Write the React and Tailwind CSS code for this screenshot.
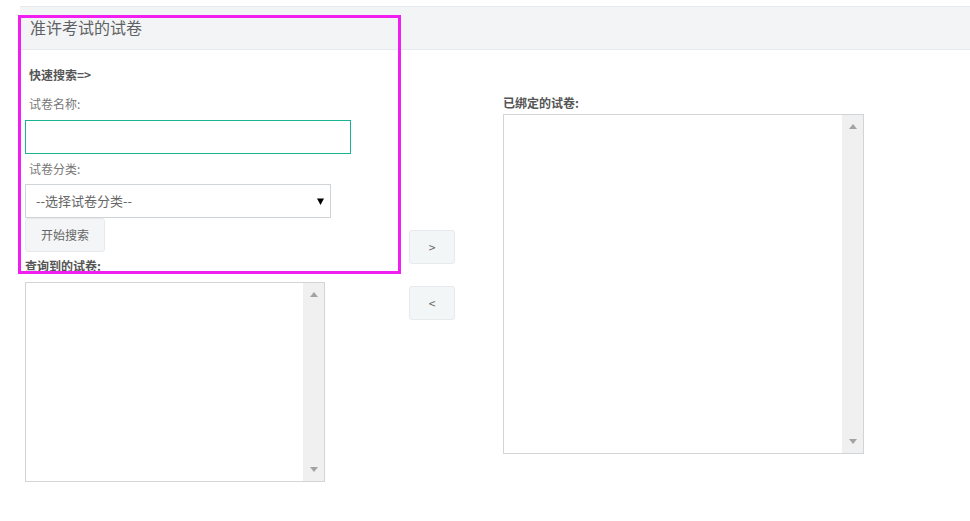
import React from "react";

const font = { fontFamily: '"Noto Sans CJK SC", "Liberation Sans", sans-serif' };

const ListBox = ({ className }) => (
  <div className={`flex border border-[#d1d5d7] bg-white ${className}`}>
    <div className="flex-1" />
    <div className="w-[21px] bg-[#f0f0f0] flex flex-col items-center justify-between pt-[9px] pb-[9px]">
      <svg width="8" height="5" viewBox="0 0 8 5"><path d="M0 5 L4 0 L8 5 Z" fill="#a3a3a3" /></svg>
      <svg width="8" height="5" viewBox="0 0 8 5"><path d="M0 0 L8 0 L4 5 Z" fill="#a3a3a3" /></svg>
    </div>
  </div>
);

export default function App() {
  return (
    <div className="relative w-[970px] h-[521px] bg-white text-[#676a6c] overflow-hidden" style={font}>
      <div className="pl-[20px] pt-[6px]">
        {/* header */}
        <div className="h-[44px] bg-[#f3f4f6] border-y border-[#e7eaec] flex items-center pl-[10px]">
          <span className="text-[16px] leading-[20px] text-[#5f6264] -mt-[2px]">准许考试的试卷</span>
        </div>

        <div className="flex">
          {/* left column */}
          <div className="w-[389px] pl-[5px]">
            <div className="mt-[16px] pl-[4px] text-[12px] leading-[17px] font-bold text-[#555]">快速搜索=&gt;</div>
            <div className="mt-[12px] pl-[4px] text-[12px] leading-[17px] text-[#777]">试卷名称:</div>
            <div className="mt-[8px] w-[326px] h-[34px] border border-[#1ab394] bg-white" />
            <div className="mt-[6px] pl-[4px] text-[12px] leading-[17px] text-[#777]">试卷分类:</div>
            <div className="mt-[7px] w-[306px] h-[34px] border border-[#cfd4d8] bg-white flex items-center justify-between pl-[10px] pr-[6px]">
              <span className="text-[13px] text-[#666]">--选择试卷分类--</span>
              <svg width="7" height="7" viewBox="0 0 7 7" className="mt-[1px]"><path d="M0 0.5 L7 0.5 L3.5 7 Z" fill="#000" /></svg>
            </div>
            <button className="w-[80px] h-[34px] bg-[#f3f5f6] border border-[#e7eaec] rounded-[3px] text-[12px] text-[#666]">开始搜索</button>
            <div className="mt-[5px] text-[12px] leading-[17px] font-bold text-[#555]">查询到的试卷:</div>
            <ListBox className="mt-[8px] w-[300px] h-[200px]" />
          </div>

          {/* middle buttons */}
          <div className="w-[94px] flex flex-col pt-[180px] gap-[22px]">
            <button className="w-[46px] h-[34px] bg-[#f3f6f7] border border-[#e7eaec] rounded-[3px] text-[12px] text-[#666]">&gt;</button>
            <button className="w-[46px] h-[34px] bg-[#f3f6f7] border border-[#e7eaec] rounded-[3px] text-[12px] text-[#666]">&lt;</button>
          </div>

          {/* right column */}
          <div>
            <div className="mt-[44px] text-[12px] leading-[17px] font-bold text-[#555]">已绑定的试卷:</div>
            <ListBox className="mt-[3px] w-[361px] h-[340px]" />
          </div>
        </div>
      </div>

      {/* highlight overlay */}
      <div className="absolute left-[18px] top-[15px] w-[383px] h-[259px] border-[3px] border-[#f01ef0] pointer-events-none" />
    </div>
  );
}
